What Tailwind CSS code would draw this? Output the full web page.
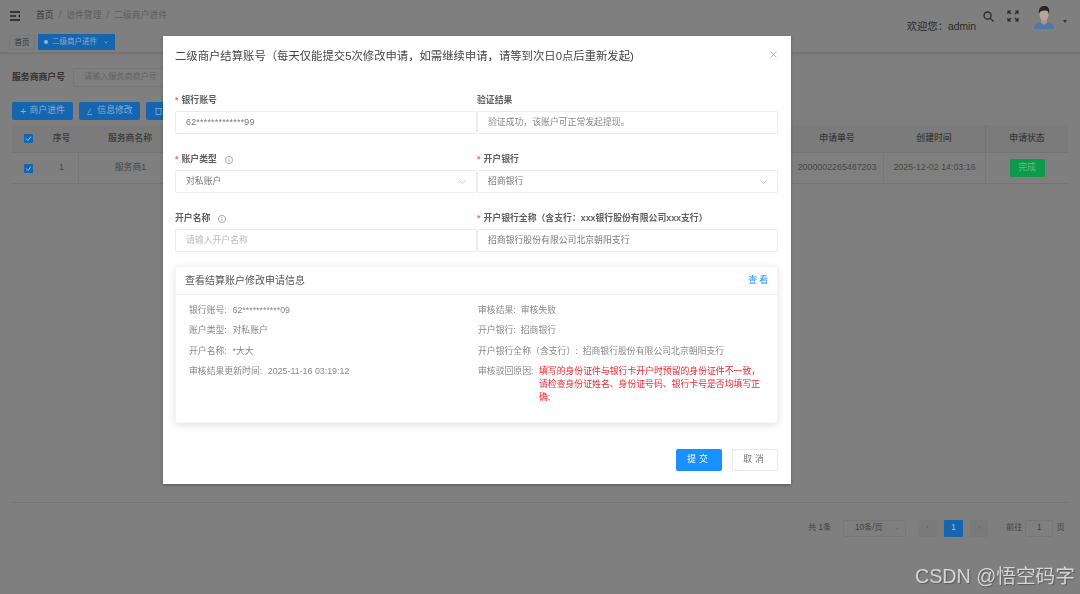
<!DOCTYPE html>
<html>
<head>
<meta charset="utf-8">
<title>二级商户进件</title>
<script src="https://cdn.jsdelivr.net/npm/@tailwindcss/browser@4"></script>
</head>
<body class="w-[1080px] h-[594px] overflow-hidden bg-[#7f7f7f] text-[8.85px] text-[#404040] font-['Liberation_Sans','Noto_Sans_CJK_SC',sans-serif]">

<!-- page behind the dialog, colours are the dimmed ones -->
<div class="h-[594px] flex flex-col">
  <header class="h-[32px] flex justify-between">
    <div class="flex items-center gap-[16px] pl-[10px]">
      <svg class="w-[10px] h-[10px]" viewBox="0 0 10 10" fill="none" stroke="#222" stroke-width="1.3"><path d="M0 1H10M0 5H6M0 9H10"/><path d="M10 3.400L8 5l2 1.600z" fill="#222" stroke="none"/></svg>
      <div class="flex gap-[5px]">
        <span class="text-[#333]">首页</span><span class="text-[#5c5c5c]">/</span>
        <span class="text-[#5c5c5c]">进件管理</span><span class="text-[#5c5c5c]">/</span>
        <span class="text-[#5c5c5c]">二级商户进件</span>
      </div>
    </div>
    <div class="flex items-start pr-[13px]">
      <span class="mt-[19px] text-[10.3px] text-[#2a2a2a] whitespace-nowrap">欢迎您：admin</span>
      <svg class="ml-[7px] mt-[11px] w-[11px] h-[11px]" viewBox="0 0 12 12" fill="none" stroke="#2a2a2a" stroke-width="1.4"><circle cx="5" cy="5" r="3.900"/><path d="M8 8l3.600 3.600"/></svg>
      <svg class="ml-[13px] mt-[10px] w-[12px] h-[12px]" viewBox="0 0 12 12" fill="none" stroke="#2a2a2a" stroke-width="1.2"><path d="M1 4V1H4M1 1l3 3M8 1h3v3M11 1L8 4M1 8v3h3M1 11l3-3M8 11h3V8M11 11L8 8"/></svg>
      <svg class="ml-[14px] mt-[5px] w-[22px] h-[24px]" viewBox="0 0 22 24"><path d="M1 24c0-5 4-7 10-7s10 2 10 7z" fill="#4f78a8"/><path d="M8 13h6v5l-3 2-3-2z" fill="#a8948a"/><ellipse cx="11" cy="9.500" rx="4.600" ry="6" fill="#b8a597"/><path d="M6 9C5 3.500 8 1 11.500 1 15 1 17 3.500 16 9 15.500 6.500 14.500 5.500 12.500 5.500 10 5.500 7 5.500 6 9z" fill="#262626"/></svg>
      <svg class="ml-[8px] mt-[20px] w-[4px] h-[3px]" viewBox="0 0 4 3"><path d="M0 0h4L2 3z" fill="#333"/></svg>
    </div>
  </header>

  <div class="h-[21px] flex items-start gap-[3px] pl-[9px] border-b border-[#757575] shadow-[0_1px_2px_rgba(0,0,0,0.1)] text-[7.5px]">
    <span class="h-[15px] mt-[3px] w-[26px] flex items-center justify-center border border-[#777777] text-[#333]">首页</span>
    <span class="h-[16px] mt-[2px] w-[77px] pl-[6px] flex items-center gap-[4px] bg-[#1566ae] text-[#86aed3]">
      <i class="w-[4px] h-[4px] rounded-full bg-[#93b6d6]"></i>二级商户进件<svg class="ml-[3px] w-[4px] h-[3px]" viewBox="0 0 4 3" fill="none" stroke="#a8c6e0" stroke-width=".6"><path d="M.5.5L2 2 3.500.5"/></svg>
    </span>
  </div>

  <div class="mt-[15px] flex items-center h-[19px] pl-[12px] gap-[8px]">
    <b class="font-semibold text-[#333] whitespace-nowrap">服务商商户号</b>
    <div class="w-[98px] h-[19px] pl-[10px] flex items-center border border-[#777777] rounded-[2px] text-[8.1px] text-[#636363]">请输入服务商商户号</div>
  </div>

  <div class="mt-[15px] flex gap-[6px] pl-[12px] h-[18px] text-[#86aed3]">
    <span class="w-[61px] rounded-[2px] bg-[#1566ae] flex items-center justify-center gap-[3px]"><span class="text-[11px] leading-none">+</span>商户进件</span>
    <span class="w-[61px] rounded-[2px] bg-[#1566ae] flex items-center justify-center gap-[4px]">
      <svg class="w-[7px] h-[7px]" viewBox="0 0 7 7" fill="none" stroke="#86aed3" stroke-width=".8"><path d="M5 .5L2 5M1 6.500h5"/></svg>信息修改</span>
    <span class="w-[61px] rounded-[2px] bg-[#1566ae] pl-[9px] flex items-center">
      <svg class="w-[7px] h-[8px]" viewBox="0 0 7 8" fill="none" stroke="#86aed3" stroke-width=".8"><path d="M0 1.500h7M1 1.500V7.500h5V1.500"/></svg></span>
  </div>

  <div class="mt-[5px] mx-[12px] w-[1056px]">
    <div class="h-[28px] flex items-center bg-[#7b7b7b] border-b border-[#747474] font-medium text-[#383838] text-center">
      <div class="w-[33px] flex justify-center"><span class="w-[9px] h-[9px] bg-[#1566ae] rounded-[1px] flex items-center justify-center"><svg class="w-[7px] h-[7px]" viewBox="0 0 7 7" fill="none" stroke="#9cbfdd"><path d="M1 3.500l2 2 3-4"/></svg></span></div>
      <div class="w-[33px]">序号</div>
      <div class="w-[104px]">服务商名称</div>
      <div class="w-[609px]"></div>
      <div class="w-[92px]">申请单号</div>
      <div class="w-[102px]">创建时间</div>
      <div class="w-[83px] self-stretch flex items-center justify-center border-l border-[#747474]">申请状态</div>
    </div>
    <div class="h-[31px] flex items-center border-b border-[#747474] text-[#474747] text-center">
      <div class="w-[33px] flex justify-center"><span class="w-[9px] h-[9px] bg-[#1566ae] rounded-[1px] flex items-center justify-center"><svg class="w-[7px] h-[7px]" viewBox="0 0 7 7" fill="none" stroke="#9cbfdd"><path d="M1 3.500l2 2 3-4"/></svg></span></div>
      <div class="w-[33px]">1</div>
      <div class="w-[104px] self-stretch flex items-center justify-center border-l border-[#777777]">服务商1</div>
      <div class="w-[609px]"></div>
      <div class="w-[92px] whitespace-nowrap">2000002265487203</div>
      <div class="w-[102px] self-stretch flex items-center justify-center whitespace-nowrap border-l border-[#777777]">2025-12-02 14:03:16</div>
      <div class="w-[83px] self-stretch flex items-center justify-center border-l border-[#777777]">
        <span class="w-[35px] h-[18px] rounded-[2px] bg-[#0c9a4b] text-[#63bd8c] flex items-center justify-center">完成</span>
      </div>
    </div>
  </div>

  <div class="mt-[318px] mx-[12px] border-t border-[#757575] w-[1056px]"></div>

  <div class="mt-[17px] h-[17px] flex items-center pl-[808px] text-[8.2px] text-[#3f3f3f] whitespace-nowrap">
    <span class="w-[35px]">共 1条</span>
    <span class="w-[63px] h-[17px] pl-[11px] pr-[5px] flex items-center justify-between border border-[#777777] rounded-[2px]">10条/页<svg class="w-[5px] h-[3px]" viewBox="0 0 5 3" fill="none" stroke="#636363" stroke-width=".7"><path d="M.5.5l2 2 2-2"/></svg></span>
    <span class="ml-[12px] w-[19px] h-[17px] bg-[#7a7a7a] rounded-[2px] flex items-center justify-center text-[#5f5f5f]">‹</span>
    <span class="ml-[7px] w-[19px] h-[17px] bg-[#1566ae] rounded-[1px] flex items-center justify-center text-[#a8c6e0]">1</span>
    <span class="ml-[7px] w-[18px] h-[17px] bg-[#7a7a7a] rounded-[2px] flex items-center justify-center text-[#5f5f5f]">›</span>
    <span class="ml-[18px]">前往</span>
    <span class="ml-[3px] w-[28px] h-[17px] flex items-center justify-center border border-[#777777] rounded-[2px]">1</span>
    <span class="ml-[3px]">页</span>
  </div>
</div>

<!-- dialog -->
<div class="fixed inset-0 pl-[163px] pt-[36px]">
  <div class="w-[628px] h-[448px] bg-white px-[12px] flex flex-col shadow-[0_1px_3px_rgba(0,0,0,0.3)]">
    <div class="h-[39px] flex items-start justify-between pt-[12px] pr-[1px]">
      <h2 class="text-[11.35px] leading-[16px] text-[#444] whitespace-nowrap">二级商户结算账号（每天仅能提交5次修改申请，如需继续申请，请等到次日0点后重新发起)</h2>
      <svg class="w-[7px] h-[7px] mt-[3px] mr-[1px]" viewBox="0 0 7 7" fill="none" stroke="#b5b5b5"><path d="M.5.5l6 6M6.500.5l-6 6"/></svg>
    </div>

    <div class="mt-[20px] grid grid-cols-[302px_301px] gap-y-[20px] font-semibold">
      <div>
        <label class="h-[12px] flex items-center text-[#5f5f5f]"><i class="not-italic text-[#f56c6c] mr-[3px]">*</i>银行账号</label>
        <div class="mt-[4px] h-[23px] pl-[10px] flex items-center border border-[#eaecf0] rounded-[2px] font-normal tracking-[0.25px] text-[#777]">62*************99</div>
      </div>
      <div>
        <label class="h-[12px] flex items-center text-[#5f5f5f]">验证结果</label>
        <div class="mt-[4px] h-[23px] pl-[10px] flex items-center border border-[#eaecf0] rounded-[2px] font-normal text-[#888]">验证成功，该账户可正常发起提现。</div>
      </div>

      <div>
        <label class="h-[12px] flex items-center text-[#5f5f5f]"><i class="not-italic text-[#f56c6c] mr-[3px]">*</i>账户类型
          <svg class="ml-[8px] w-[8px] h-[8px]" viewBox="0 0 8 8" fill="none" stroke="#888" stroke-width=".7"><circle cx="4" cy="4" r="3.600"/><path d="M4 3.400V6M4 2v.7"/></svg>
        </label>
        <div class="mt-[4px] h-[23px] px-[10px] flex items-center justify-between border border-[#eaecf0] rounded-[2px] font-normal text-[#777]">对私账户
          <svg class="w-[7px] h-[4px]" viewBox="0 0 7 4" fill="none" stroke="#bbb" stroke-width=".8"><path d="M.5.5l3 3 3-3"/></svg>
        </div>
      </div>
      <div>
        <label class="h-[12px] flex items-center text-[#5f5f5f]"><i class="not-italic text-[#f56c6c] mr-[3px]">*</i>开户银行</label>
        <div class="mt-[4px] h-[23px] px-[10px] flex items-center justify-between border border-[#eaecf0] rounded-[2px] font-normal text-[#777]">招商银行
          <svg class="w-[7px] h-[4px]" viewBox="0 0 7 4" fill="none" stroke="#bbb" stroke-width=".8"><path d="M.5.5l3 3 3-3"/></svg>
        </div>
      </div>

      <div>
        <label class="h-[12px] flex items-center text-[#5f5f5f]">开户名称
          <svg class="ml-[8px] w-[8px] h-[8px]" viewBox="0 0 8 8" fill="none" stroke="#888" stroke-width=".7"><circle cx="4" cy="4" r="3.600"/><path d="M4 3.400V6M4 2v.7"/></svg>
        </label>
        <div class="mt-[4px] h-[23px] pl-[10px] flex items-center border border-[#eaecf0] rounded-[2px] font-normal text-[#bbb]">请输入开户名称</div>
      </div>
      <div>
        <label class="h-[12px] flex items-center text-[#5f5f5f]"><i class="not-italic text-[#f56c6c] mr-[3px]">*</i>开户银行全称（含支行：xxx银行股份有限公司xxx支行）</label>
        <div class="mt-[4px] h-[23px] pl-[10px] flex items-center border border-[#eaecf0] rounded-[2px] font-normal text-[#777]">招商银行股份有限公司北京朝阳支行</div>
      </div>
    </div>

    <section class="mt-[14px] w-[603px] h-[157px] rounded-[2px] border border-[#f4f4f4] shadow-[0_2px_8px_rgba(0,0,0,0.12)]">
      <div class="h-[28px] px-[9px] flex items-center justify-between border-b border-[#f0f0f0]">
        <span class="text-[10px] text-[#555]">查看结算账户修改申请信息</span>
        <span class="text-[#1890ff] tracking-[2px] -mr-[2px]">查看</span>
      </div>
      <div class="pl-[13px] pt-[9px] grid grid-cols-[289px_1fr] text-[#888]">
        <div class="flex flex-col gap-y-[7.250px] leading-[13px]">
          <p>银行账号:&nbsp;&nbsp;&#8202;62***********09</p>
          <p>账户类型:&nbsp;&nbsp;&#8202;对私账户</p>
          <p>开户名称:&nbsp;&nbsp;&#8202;*大大</p>
          <p>审核结果更新时间:&nbsp;&nbsp;&#8202;2025-11-16 03:19:12</p>
        </div>
        <div class="flex flex-col gap-y-[7.250px] leading-[13px]">
          <p>审核结果:&nbsp;&nbsp;审核失败</p>
          <p>开户银行:&nbsp;&nbsp;招商银行</p>
          <p>开户银行全称（含支行）:&nbsp;&nbsp;招商银行股份有限公司北京朝阳支行</p>
          <div class="flex">
            <span class="w-[61px] shrink-0">审核驳回原因:</span>
            <span class="w-[225px] text-[#f5222d]">填写的身份证件与银行卡开户时预留的身份证件不一致，请检查身份证姓名、身份证号码、银行卡号是否均填写正确;</span>
          </div>
        </div>
      </div>
    </section>

    <div class="mt-[26px] flex justify-end gap-[10px] pr-[1px]">
      <button class="w-[46px] h-[22px] rounded-[2px] bg-[#1890ff] text-white tracking-[3px]">提交</button>
      <button class="w-[46px] h-[22px] rounded-[2px] border border-[#e8e8e8] text-[#777] tracking-[3px]">取消</button>
    </div>
  </div>
</div>

<!-- watermark -->
<div class="fixed right-[5px] bottom-[5px] text-[19.7px] leading-[26px] text-[#d6d6d6] whitespace-nowrap [text-shadow:1px_1px_1px_rgba(0,0,0,0.3)]">CSDN @悟空码字</div>
</body>
</html>
